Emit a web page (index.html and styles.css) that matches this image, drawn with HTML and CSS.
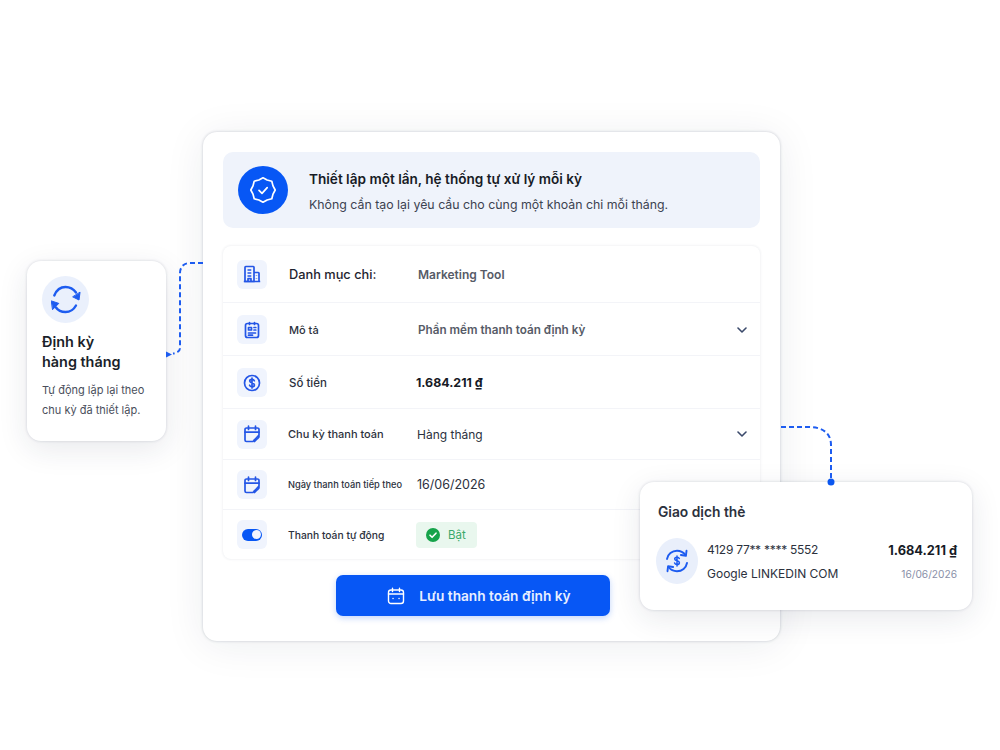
FILE: index.html
```html
<!DOCTYPE html>
<html lang="vi">
<head>
    <meta charset="UTF-8">
    <title>Thanh toán định kỳ</title>
    <link rel="stylesheet" href="styles.css">
</head>
<body>
    <div class="stage">
        <div class="main-card">
            <div class="banner">
                <div class="banner-icon">
                    <svg width="26" height="26" viewBox="0 0 26 26" fill="none" stroke="#fff" stroke-width="1.7" stroke-linecap="round" stroke-linejoin="round">
                        <path d="M13 .8L17.100 3 21.800 4.200 23 8.900 25.200 13 23 17.100 21.800 21.800 17.100 23 13 25.200 8.900 23 4.200 21.800 3 17.100 .8 13 3 8.900 4.200 4.200 8.900 3z"/>
                        <path d="M9 13.300l3 3 5.200-5.600"/>
                    </svg>
                </div>
                <div class="banner-text">
                    <div class="banner-title">Thiết lập một lần, hệ thống tự xử lý mỗi kỳ</div>
                    <div class="banner-sub">Không cần tạo lại yêu cầu cho cùng một khoản chi mỗi tháng.</div>
                </div>
            </div>

            <div class="form-table">
                <div class="row row-category">
                    <div class="row-icon">
                        <svg width="18" height="18" viewBox="0 0 18 18" fill="none" stroke="#2456e6" stroke-width="1.7" stroke-linejoin="round">
                            <path d="M2 16.500V2.200c0-.4.3-.7.7-.7h7.600c.4 0 .7.3.7.7v14.300z"/>
                            <path d="M11 7.500h4.300c.4 0 .7.3.7.7v8.300h-5M.8 16.500h16.400M4.500 5h3.800M4.500 8h3.800M4.500 11h3.800M5 16.500v-2.800h3v2.800M13.500 10.500v.5M13.500 13.500v.5"/>
                        </svg>
                    </div>
                    <div class="label label-strong">Danh mục chi:</div>
                    <div class="value value-tool">Marketing Tool</div>
                </div>
                <div class="row row-desc">
                    <div class="row-icon">
                        <svg width="18" height="18" viewBox="0 0 18 18" fill="none" stroke="#2456e6" stroke-width="1.700" stroke-linecap="round" stroke-linejoin="round">
                            <rect x="2.500" y="2.500" width="13" height="14" rx="2"/>
                            <path d="M6.500 1.500v2M11.500 1.500v2M5.500 6.500h3v2.500h-3zM11 6.500h1.800M11 9h1.800M5.500 12h7M5.500 14.200h4"/>
                        </svg>
                    </div>
                    <div class="label label-desc">Mô tả</div>
                    <div class="value value-grey">Phần mềm thanh toán định kỳ</div>
                    <svg class="chevron" width="10" height="6" viewBox="0 0 10 6" fill="none" stroke="#3b4a6b" stroke-width="1.600" stroke-linecap="round" stroke-linejoin="round"><path d="M1 1l4 4 4-4"/></svg>
                </div>
                <div class="row row-amount">
                    <div class="row-icon">
                        <svg width="18" height="18" viewBox="0 0 18 18" fill="none" stroke="#2456e6" stroke-width="1.700" stroke-linecap="round">
                            <circle cx="9" cy="9" r="7.500"/>
                            <path d="M11.300 6.800C11 5.900 10.100 5.300 9 5.300c-1.300 0-2.300.7-2.300 1.800C6.700 9.600 11.400 8.300 11.400 10.900c0 1.100-1.100 1.800-2.400 1.800-1.200 0-2.100-.6-2.400-1.500M9 4v10"/>
                        </svg>
                    </div>
                    <div class="label label-amount">Số tiền</div>
                    <div class="value value-amount">1.684.211 ₫</div>
                </div>
                <div class="row row-cycle">
                    <div class="row-icon">
                        <svg width="18" height="18" viewBox="0 0 18 18" fill="none" stroke="#2456e6" stroke-width="1.700" stroke-linecap="round" stroke-linejoin="round">
                            <path d="M16 10V4.500c0-.8-.7-1.500-1.500-1.500h-11C2.700 3 2 3.700 2 4.500v10.500c0 .8.700 1.500 1.500 1.500H10z"/>
                            <path d="M5.500 1.200v3.300M12.500 1.200v3.300M2 7.200h14M16 12l-4.500 4.500M16 11c-.5 2.500-1.800 3.500-4.500 3.800"/>
                        </svg>
                    </div>
                    <div class="label">Chu kỳ thanh toán</div>
                    <div class="value value-cycle">Hàng tháng</div>
                    <svg class="chevron" width="10" height="6" viewBox="0 0 10 6" fill="none" stroke="#3b4a6b" stroke-width="1.600" stroke-linecap="round" stroke-linejoin="round"><path d="M1 1l4 4 4-4"/></svg>
                </div>
                <div class="row row-next">
                    <div class="row-icon">
                        <svg width="18" height="18" viewBox="0 0 18 18" fill="none" stroke="#2456e6" stroke-width="1.700" stroke-linecap="round" stroke-linejoin="round">
                            <path d="M16 10V4.500c0-.8-.7-1.500-1.500-1.500h-11C2.700 3 2 3.700 2 4.500v10.500c0 .8.700 1.500 1.500 1.500H10z"/>
                            <path d="M5.500 1.200v3.300M12.500 1.200v3.300M2 7.200h14M16 12l-4.500 4.500M16 11c-.5 2.500-1.800 3.500-4.500 3.800"/>
                        </svg>
                    </div>
                    <div class="label label-small">Ngày thanh toán tiếp theo</div>
                    <div class="value">16/06/2026</div>
                </div>
                <div class="row row-auto">
                    <div class="row-icon">
                        <span class="toggle"></span>
                    </div>
                    <div class="label label-auto">Thanh toán tự động</div>
                    <div class="status">
                        <svg width="14" height="14" viewBox="0 0 14 14"><circle cx="7" cy="7" r="7" fill="#16a34a"/><path d="M4 7.200l2.100 2.100 3.900-4.100" fill="none" stroke="#fff" stroke-width="1.600" stroke-linecap="round" stroke-linejoin="round"/></svg>
                        <span>Bật</span>
                    </div>
                </div>
            </div>

            <div class="actions">
                <button class="btn-save">
                    <svg width="18" height="18" viewBox="0 0 18 18" fill="none" stroke="#fff" stroke-width="1.400" stroke-linecap="round" stroke-linejoin="round">
                        <rect x="1.500" y="3" width="15" height="13.500" rx="2.500"/>
                        <path d="M5.500 1.200v3.300M12.500 1.200v3.300M1.500 7h15M6 11.500h.1M12 11.500h.1"/>
                    </svg>
                    Lưu thanh toán định kỳ
                </button>
            </div>
        </div>

        <div class="float-card card-recur">
            <div class="recur-icon">
                <svg width="30" height="30" viewBox="0 0 30 30" fill="none" stroke="#1d5cf0" stroke-width="2.400" stroke-linecap="round" stroke-linejoin="round">
                    <path d="M3.300 10.500C5.500 5 9.500 2 14.500 2c4.500 0 8 2 10.500 5.500"/>
                    <path d="M25 20.500c-2.500 4.500-6 6.500-10.500 6.500-4 0-7.500-1.500-9.500-4.500"/>
                    <path d="M29 7.500l-1 7.500-6-3z" fill="#1d5cf0" stroke-width="1"/>
                    <path d="M.6 16l7.200 2.400-6 6z" fill="#1d5cf0" stroke-width="1"/>
                </svg>
            </div>
            <div class="recur-title">Định kỳ<br>hàng tháng</div>
            <div class="recur-text">Tự động lặp lại theo<br>chu kỳ đã thiết lập.</div>
        </div>

        <div class="float-card card-txn">
            <div class="txn-title">Giao dịch thẻ</div>
            <div class="txn-body">
                <div class="txn-icon">
                    <svg width="26" height="26" viewBox="0 0 26 26" fill="none" stroke="#1d5cf0" stroke-width="1.900" stroke-linecap="round" stroke-linejoin="round">
                        <path d="M3 11C3.800 6.200 8 2.800 13 2.800c3.500 0 6.500 1.600 8.400 4.200"/>
                        <path d="M23 15c-.8 4.800-5 8.200-10 8.200-3.500 0-6.500-1.600-8.400-4.200"/>
                        <path d="M22.500 2.800l-.6 5-5-.8M3.500 23.200l.6-5 5 .8"/>
                        <path d="M15.300 10.600c-.3-.9-1.200-1.400-2.300-1.400-1.300 0-2.300.7-2.300 1.800 0 2.400 4.700 1.200 4.700 3.700 0 1.100-1.100 1.800-2.400 1.800-1.200 0-2.100-.6-2.400-1.500M13 8v10" stroke-width="1.500"/>
                    </svg>
                </div>
                <div class="txn-info">
                    <div class="txn-card-no">4129 77** **** 5552</div>
                    <div>Google LINKEDIN COM</div>
                </div>
                <div class="txn-right">
                    <div class="txn-amount">1.684.211 ₫</div>
                    <div class="txn-date">16/06/2026</div>
                </div>
            </div>
        </div>

        <svg class="connector connector-left" width="40" height="100" viewBox="0 0 40 100" fill="none">
            <path d="M37 1H24c-6 0-10 4-10 10v75c0 3-3 5-7 5.500" stroke="#1d5cf0" stroke-width="2" stroke-dasharray="5 3"/>
            <path d="M0 89.500l6 3-6 3z" fill="#1d5cf0"/>
        </svg>

        <svg class="connector connector-right" width="56" height="62" viewBox="0 0 56 62" fill="none">
            <path d="M1 2h28c12 0 22 5 22 18v36" stroke="#1d5cf0" stroke-width="2" stroke-dasharray="5 3"/>
            <circle cx="51" cy="57" r="3.500" fill="#0b57f0"/>
        </svg>
    </div>
</body>
</html>
```

FILE: styles.css
```css
html, body {
    margin: 0;
    padding: 0;
    background: #fff;
}

.stage {
    position: relative;
    width: 1000px;
    height: 750px;
    padding: 132px 0 0 203px;
    box-sizing: border-box;
    overflow: hidden;
    font-family: Inter, "Noto Sans", sans-serif;
    color: #1b1f2a;
}

.main-card {
    width: 577px;
    height: 509px;
    box-sizing: border-box;
    padding: 20px;
    background: #fff;
    border-radius: 14px;
    box-shadow: 0 0 3px rgba(30, 40, 70, .24), 0 4px 40px rgba(30, 40, 70, .08);
}

.banner {
    display: flex;
    align-items: center;
    height: 76px;
    padding-left: 15px;
    background: #eff3fb;
    border-radius: 10px;
}

.banner-icon {
    display: flex;
    align-items: center;
    justify-content: center;
    width: 50px;
    height: 48px;
    margin-right: 21px;
    background: #0757f5;
    border-radius: 50%;
}

.banner-title {
    font-size: 13.6px;
    font-weight: 600;
    color: #171b26;
    margin-bottom: 10px;
    padding-top: 2px;
}

.banner-sub {
    font-size: 12.35px;
    color: #3c4250;
}

.form-table {
    margin-top: 18px;
    height: 313px;
    border-radius: 8px;
    box-shadow: 0 0 3px rgba(30, 40, 70, .11);
}

.row {
    display: flex;
    align-items: center;
    padding-left: 14px;
    border-bottom: 1px solid #f3f4f8;
    box-sizing: border-box;
}

.row-category {
    height: 57px;
}

.row-desc {
    height: 53px;
    padding-top: 1px;
}

.row-amount {
    height: 53px;
    padding-top: 1px;
}

.row-cycle {
    height: 51px;
}

.row-next {
    height: 50px;
}

.row-auto {
    height: 49px;
    border-bottom: none;
}

.row-icon {
    display: flex;
    align-items: center;
    justify-content: center;
    flex: none;
    width: 30px;
    height: 29px;
    margin-right: 21px;
    background: #f0f4fd;
    border-radius: 6px;
}

.label {
    width: 129px;
    flex: none;
    font-size: 11px;
    font-weight: 500;
    color: #2c313d;
}

.label-strong {
    font-size: 12.8px;
    color: #1f2430;
    padding-left: 1px;
    width: 128px;
}

.label-desc {
    padding-left: 1px;
    width: 128px;
}

.label-amount {
    font-size: 11.5px;
    padding-left: 1px;
    width: 128px;
}

.label-small {
    font-size: 9.25px;
}

.label-auto {
    font-size: 10.3px;
}

.value {
    flex: 1;
    font-size: 12.5px;
    color: #2c313d;
}

.value-tool {
    font-size: 12px;
    font-weight: 600;
    color: #565b67;
    padding-left: 1px;
}

.value-grey {
    font-size: 11.7px;
    font-weight: 600;
    color: #565b67;
    padding-left: 1px;
}

.value-amount {
    font-size: 12.4px;
    font-weight: 700;
    color: #171b26;
    margin-left: -1px;
}

.value-cycle {
    font-size: 12px;
}

.chevron {
    margin-right: 13px;
}

.toggle {
    position: relative;
    display: block;
    width: 20px;
    height: 12px;
    background: #0757f5;
    border-radius: 6px;
}

.toggle::after {
    content: "";
    position: absolute;
    top: 1.5px;
    right: 1.5px;
    width: 9px;
    height: 9px;
    background: #f2f5fd;
    border-radius: 50%;
}

.status {
    display: flex;
    align-items: center;
    gap: 8px;
    width: 61px;
    height: 26px;
    box-sizing: border-box;
    margin-left: -1px;
    padding-left: 10px;
    background: #e9f7ee;
    border-radius: 4px;
    font-size: 11.5px;
    color: #3aa96b;
}

.actions {
    display: flex;
    margin-top: 16px;
    padding-left: 113px;
}

.btn-save {
    display: flex;
    align-items: center;
    justify-content: center;
    gap: 14px;
    width: 274px;
    height: 41px;
    padding: 0 0 0 12px;
    border: none;
    outline: none;
    background: #0757f5;
    border-radius: 7px;
    box-shadow: 0 2px 6px rgba(11, 87, 240, .25);
    font-family: inherit;
    font-size: 13.7px;
    font-weight: 600;
    color: #e8efff;
}

.connector {
    position: absolute;
}

.connector-left {
    left: 166px;
    top: 262px;
}

.connector-right {
    left: 780px;
    top: 425px;
}

.float-card {
    position: absolute;
    box-sizing: border-box;
    background: #fff;
    border-radius: 14px;
    box-shadow: 0 0 3px rgba(30, 40, 70, .18), 0 8px 30px rgba(30, 40, 70, .1);
}

.card-recur {
    left: 27px;
    top: 261px;
    width: 139px;
    height: 180px;
    padding: 15px 15px 0;
}

.recur-icon {
    display: flex;
    align-items: center;
    justify-content: center;
    width: 47px;
    height: 47px;
    margin-bottom: 9px;
    background: #eaf0fc;
    border-radius: 50%;
}

.recur-title {
    font-size: 14.4px;
    font-weight: 600;
    line-height: 20px;
    color: #1b1f2a;
    margin-bottom: 8px;
}

.recur-text {
    font-size: 11px;
    line-height: 20px;
    color: #4a4f5c;
}

.card-txn {
    left: 640px;
    top: 482px;
    width: 332px;
    height: 128px;
    padding: 22px 15px 0 16px;
}

.txn-title {
    margin-left: 2px;
    font-size: 13.8px;
    font-weight: 600;
    color: #2c313d;
    margin-bottom: 18px;
}

.txn-body {
    display: flex;
    align-items: center;
}

.txn-icon {
    display: flex;
    align-items: center;
    justify-content: center;
    width: 42px;
    height: 46px;
    margin-right: 9px;
    background: #e9effb;
    border-radius: 50%;
}

.txn-info {
    flex: 1;
    display: flex;
    flex-direction: column;
    gap: 9px;
    font-size: 12px;
    color: #2c313d;
}

.txn-card-no {
    letter-spacing: -.28px;
}

.txn-right {
    display: flex;
    flex-direction: column;
    align-items: flex-end;
    gap: 10px;
}

.txn-amount {
    font-size: 12.8px;
    font-weight: 700;
    color: #171b26;
}

.txn-date {
    font-size: 10.2px;
    color: #8a90a8;
}
```
